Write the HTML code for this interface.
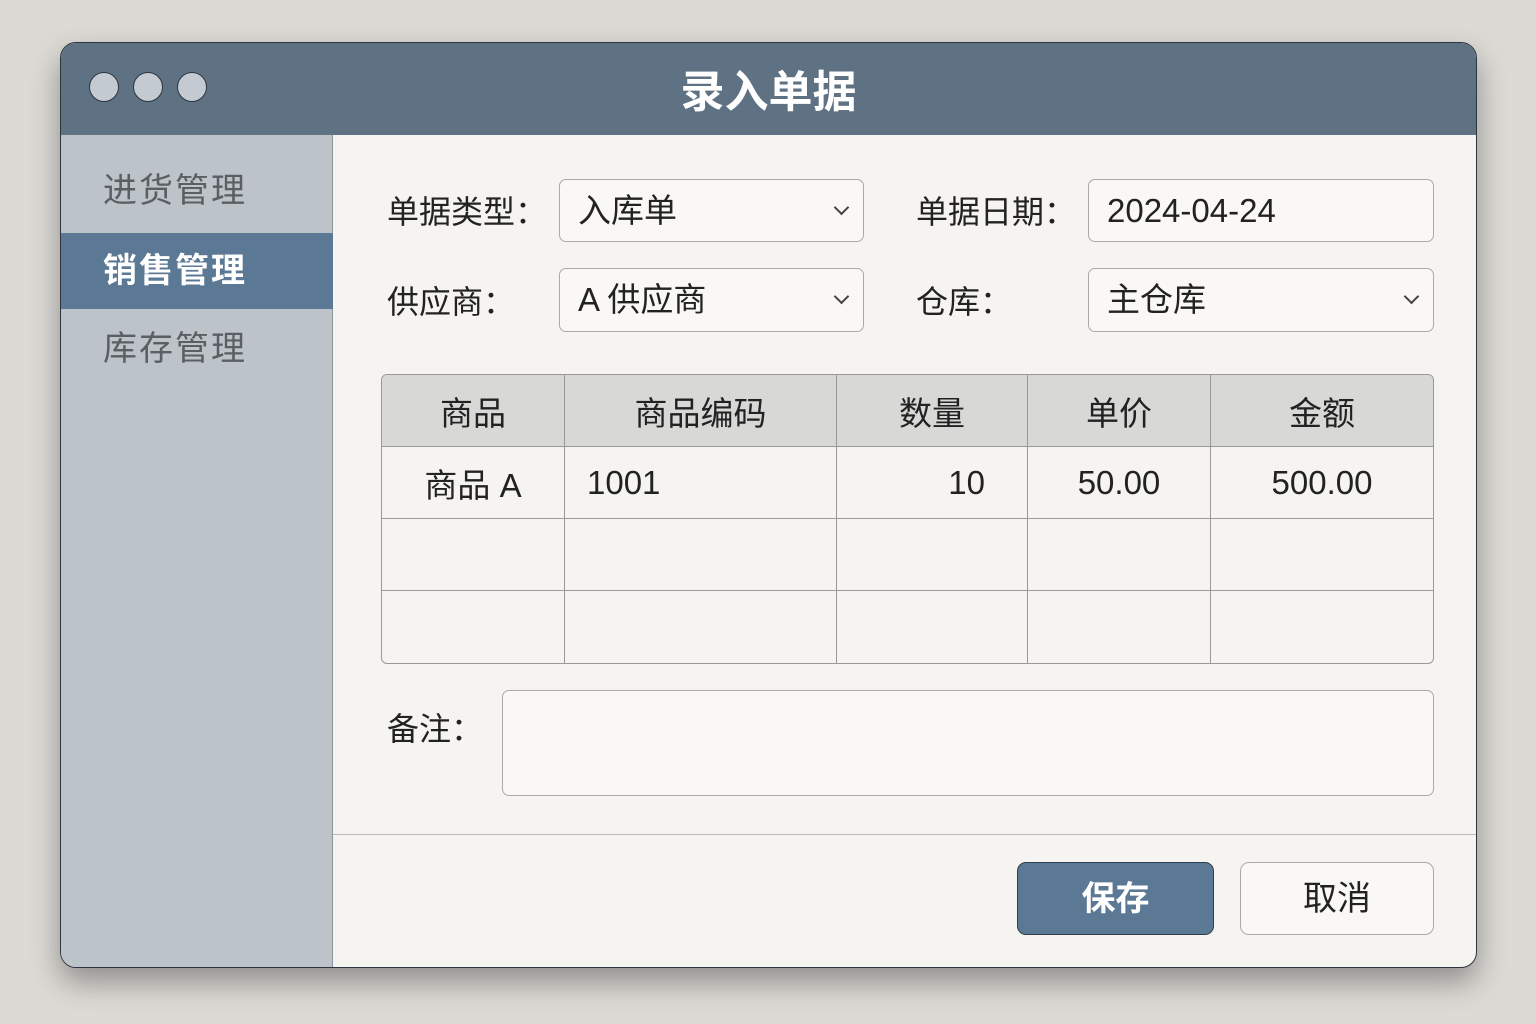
<!DOCTYPE html>
<html><head><meta charset="utf-8"><style>
*{box-sizing:border-box;margin:0;padding:0}
body{width:1536px;height:1024px;background:#dcdad5;font-family:"Liberation Sans","Noto Sans CJK SC",sans-serif;position:relative;overflow:hidden;color:#222}
.win{position:absolute;left:60px;top:42px;width:1417px;height:926px;border-radius:16px;background:#f6f4f0;border:1.5px solid #2e3540;overflow:hidden;box-shadow:0 14px 30px rgba(0,0,0,.35)}
.title{position:absolute;left:0;top:0;width:100%;height:92px;background:#5f7283;color:#fff;font-size:44px;font-weight:bold;text-align:center;line-height:100px}
.dot{position:absolute;top:29px;width:30px;height:30px;border-radius:50%;background:#c4cad1;border:1.5px solid #2e3540}
.side{position:absolute;left:0;top:92px;width:272px;height:840px;background:#bcc3c9;border-right:1px solid #8d959c}
.si{position:absolute;left:0;width:272px;height:76px;font-size:34px;color:#5b5f63;padding-left:42px;line-height:76px;letter-spacing:2px}
.si.act{background:#5b7895;color:#fff;font-weight:bold}
.a{position:absolute}
.lbl{position:absolute;font-size:32px;color:#222}
.box{position:absolute;background:#faf8f5;border:1.5px solid #aaa;border-radius:7px;font-size:33px;padding-left:18px;line-height:62px}
.chev{position:absolute;right:16px;top:22px;width:11px;height:11px;border-right:2px solid #444;border-bottom:2px solid #444;transform:rotate(45deg)}
table{position:absolute;left:320px;top:331px;width:1053px;border-collapse:separate;border-spacing:0;border:1.5px solid #999;border-radius:6px;overflow:hidden;font-size:33px}
td,th{height:72px;border-right:1px solid #999;border-bottom:1px solid #999;font-weight:normal}
th{background:#d8d8d6;text-align:center}
tr td:last-child,tr th:last-child{border-right:none}
tr:last-child td{border-bottom:none}
.btn{position:absolute;top:819px;height:73px;border-radius:9px;font-size:34px;text-align:center;line-height:72px}
</style></head><body>
<div class="win">
<div class="title">录入单据
<div class="dot" style="left:28px"></div><div class="dot" style="left:72px"></div><div class="dot" style="left:116px"></div></div>
<div class="side">
<div class="si" style="top:18px">进货管理</div>
<div class="si act" style="top:98px">销售管理</div>
<div class="si" style="top:176px">库存管理</div>
</div>
<div class="lbl" style="left:326px;top:144px">单据类型：</div>
<div class="box" style="left:498px;top:136px;width:305px;height:63px">入库单<div class="chev"></div></div>
<div class="lbl" style="left:855px;top:144px">单据日期：</div>
<div class="box" style="left:1027px;top:136px;width:346px;height:63px">2024-04-24</div>
<div class="lbl" style="left:326px;top:234px">供应商：</div>
<div class="box" style="left:498px;top:225px;width:305px;height:64px">A 供应商<div class="chev"></div></div>
<div class="lbl" style="left:855px;top:234px">仓库：</div>
<div class="box" style="left:1027px;top:225px;width:346px;height:64px">主仓库<div class="chev"></div></div>
<table>
<tr><th style="width:183px">商品</th><th style="width:272px">商品编码</th><th style="width:191px">数量</th><th style="width:183px">单价</th><th>金额</th></tr>
<tr><td style="text-align:center">商品 A</td><td style="padding-left:22px">1001</td><td style="text-align:right;padding-right:42px">10</td><td style="text-align:center">50.00</td><td style="text-align:center">500.00</td></tr>
<tr><td></td><td></td><td></td><td></td><td></td></tr>
<tr><td></td><td></td><td></td><td></td><td></td></tr>
</table>
<div class="lbl" style="left:326px;top:661px">备注：</div>
<div class="box" style="left:441px;top:647px;width:932px;height:106px"></div>
<div class="a" style="left:272px;top:791px;width:1150px;height:1px;background:#bbb"></div>
<div class="btn" style="left:956px;width:197px;background:#5b7895;color:#fff;font-weight:bold;border:1.5px solid #2e3d50">保存</div>
<div class="btn" style="left:1179px;width:194px;background:#faf8f5;border:1.5px solid #aaa">取消</div>
</div>
</body></html>
